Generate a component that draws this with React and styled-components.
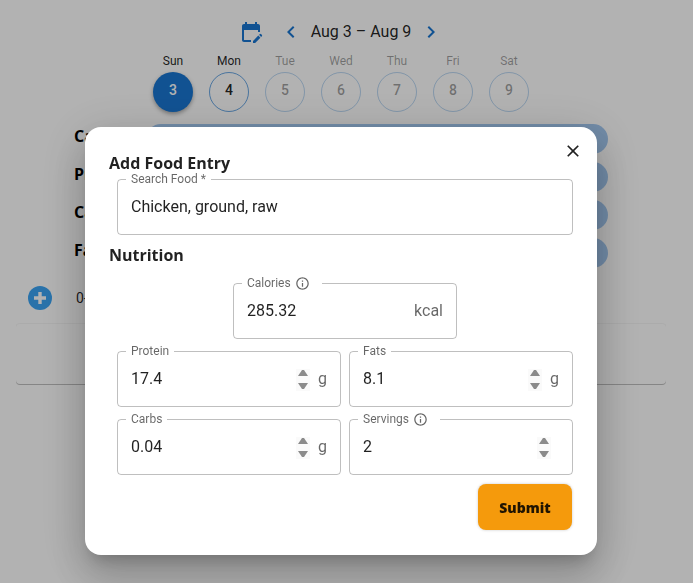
import React, { useRef } from "react";
import styled, { createGlobalStyle } from "styled-components";

const GlobalStyle = createGlobalStyle`
  *, *::before, *::after { box-sizing: border-box; }
  body {
    margin: 0;
    background: #fff;
    color: rgba(0, 0, 0, 0.87);
    font-family: Roboto, "Liberation Sans", sans-serif;
    font-size: 16px;
  }
  button, input { font: inherit; color: inherit; }
`;

const headingFont = `"Open Sans", "Noto Sans", sans-serif`;

const Page = styled.main`
  min-height: 100vh;
  padding: 20px 27px 0 16px;
`;

const WeekBar = styled.header`
  display: flex;
  justify-content: center;
  align-items: center;
  height: 24px;
`;

const IconButton = styled.button`
  display: inline-flex;
  padding: 0;
  border: 0;
  background: none;
  color: ${(p) => p.$color || "#1976d2"};
  margin-right: ${(p) => p.$gap || 0}px;
  cursor: pointer;
`;

const WeekRange = styled.span`
  padding: 0 8px;
  line-height: 24px;
`;

const Days = styled.div`
  display: flex;
  justify-content: center;
  gap: 16px;
  margin-top: 8px;
`;

const Day = styled.div`
  display: flex;
  flex-direction: column;
  align-items: center;
  width: 40px;
  color: ${(p) => (p.$muted ? "rgba(0, 0, 0, 0.38)" : "rgba(0, 0, 0, 0.87)")};
`;

const DayName = styled.span`
  height: 20px;
  font-size: 12px;
  line-height: 18px;
`;

const DayButton = styled.button`
  width: 40px;
  height: 40px;
  padding: 0 0 4px;
  border: 1px solid rgba(25, 118, 210, ${(p) => (p.$muted ? 0.3 : 0.65)});
  border-radius: 50%;
  background: ${(p) => (p.$selected ? "#1976d2" : "transparent")};
  color: ${(p) => (p.$selected ? "#fff" : "inherit")};
  box-shadow: ${(p) => (p.$selected ? "0 2px 4px rgba(0, 0, 0, 0.35)" : "none")};
  font-size: 14px;
  font-weight: 500;
`;

const Goals = styled.section`
  display: flex;
  flex-direction: column;
  gap: 8px;
  padding: 12px 58px 0;
`;

const Goal = styled.div`
  display: flex;
  align-items: center;
`;

const GoalName = styled.span`
  width: 72px;
  padding-bottom: 6px;
  font-family: ${headingFont};
  font-weight: 700;
  line-height: 24px;
  color: #000;
`;

const GoalBar = styled.div`
  flex: 1;
  height: 30px;
  border-radius: 15px;
  background: #a3c8f0;
`;

const Meal = styled.section`
  margin-top: 5px;
`;

const MealHeader = styled.div`
  display: flex;
  align-items: center;
  gap: 12px;
  height: 50px;
  padding: 0 12px;
  font-size: 14px;
`;

const MealBody = styled.div`
  height: 62px;
  border-radius: 4px;
  box-shadow: inset 0 1px 0 rgba(0, 0, 0, 0.04), inset 0 -1px 0 rgba(0, 0, 0, 0.25);
`;

const Backdrop = styled.div`
  position: fixed;
  inset: 0;
  display: flex;
  justify-content: center;
  align-items: flex-start;
  padding: 127px 27px 28px 16px;
  overflow: hidden;
  background: rgba(0, 0, 0, 0.3);
`;

const Dialog = styled.div`
  width: 100%;
  max-width: 512px;
  padding: 14px 24px 25px;
  border-radius: 16px;
  background: #fff;
  box-shadow: 0 11px 15px -7px rgba(0, 0, 0, 0.2), 0 24px 38px 3px rgba(0, 0, 0, 0.14),
    0 9px 46px 8px rgba(0, 0, 0, 0.12);
`;

const DialogHeader = styled.div`
  display: flex;
  align-items: flex-start;
  justify-content: space-between;
  height: 32px;
  margin-right: -10px;
`;

const Title = styled.h2`
  margin: 0;
  padding: ${(p) => p.$top || 0}px 0 ${(p) => p.$bottom || 0}px;
  font-family: ${headingFont};
  font-size: 16px;
  font-weight: 700;
  line-height: 18px;
`;

const Form = styled.form`
  display: flex;
  flex-direction: column;
`;

const FieldGrid = styled.div`
  display: grid;
  grid-template-columns: ${(p) => (p.$columns === 2 ? "1fr 1fr" : "1fr")};
  gap: 6px 8px;
  padding: 0 0 0 8px;
`;

const CenteredField = styled.div`
  width: 232px;
  max-width: 100%;
  margin: 10px auto 6px;
  padding-left: 8px;
  align-self: center;
`;

const FieldBox = styled.fieldset`
  display: flex;
  align-items: center;
  min-width: 0;
  height: 62px;
  margin: 0;
  padding: 0 13px 7px 8px;
  border: 1px solid rgba(0, 0, 0, 0.25);
  border-radius: 4px;

  legend {
    display: flex;
    align-items: center;
    gap: 4px;
    height: 13px;
    padding: 0 ${(p) => (p.$info ? 12 : 5)}px 0 5px;
    color: rgba(0, 0, 0, 0.6);
    font-size: 12px;
    line-height: 13px;
    white-space: nowrap;
  }

  input {
    flex: 1;
    min-width: 0;
    height: 24px;
    padding: 0 0 0 5px;
    border: 0;
    outline: 0;
    background: none;
    appearance: textfield;
  }

  input::-webkit-inner-spin-button {
    display: none;
  }
`;

const Stepper = styled.span`
  display: flex;
  flex-direction: column;
  justify-content: space-between;
  width: 14px;
  height: 22px;
  margin-top: 3px;
  background: #fafafa;
`;

const StepButton = styled.button`
  display: flex;
  justify-content: center;
  padding: 1px 0;
  border: 0;
  background: none;
  color: #8b8b8b;
`;

const Unit = styled.span`
  margin-left: 8px;
  color: rgba(0, 0, 0, 0.6);
`;

const Submit = styled.button`
  align-self: flex-end;
  width: 94px;
  height: 46px;
  margin: 9px 1px 0 0;
  border: 0;
  border-radius: 8px;
  background: #f59a0c;
  box-shadow: 0 0 3px rgba(0, 0, 0, 0.22);
  font-family: ${headingFont};
  font-size: 14px;
  font-weight: 800;
`;

function Icon({ d, size = 24 }) {
  return (
    <svg width={size} height={size} viewBox="0 0 24 24" fill="currentColor" aria-hidden="true">
      <path d={d} />
    </svg>
  );
}

const paths = {
  calendar:
    "M12 22H5c-1.11 0-2-.9-2-2L3.01 6c0-1.1.88-2 1.99-2h1V2h2v2h8V2h2v2h1c1.1 0 2 .9 2 2v6h-2v-2H5v10h7v2zm10.13-5.01.71-.71c.39-.39.39-1.02 0-1.41l-.71-.71a.9959.9959 0 0 0-1.41 0l-.71.71 2.12 2.12zm-.71.71-5.3 5.3H14v-2.12l5.3-5.3 2.12 2.12z",
  left: "M15.41 7.41 14 6l-6 6 6 6 1.41-1.41L10.83 12z",
  right: "M10 6 8.59 7.41 13.17 12l-4.58 4.59L10 18l6-6z",
  close:
    "M19 6.41 17.59 5 12 10.59 6.41 5 5 6.41 10.59 12 5 17.59 6.41 19 12 13.41 17.59 19 19 17.59 13.41 12z",
  info: "M11 7h2v2h-2zm0 4h2v6h-2zm1-9C6.48 2 2 6.48 2 12s4.48 10 10 10 10-4.48 10-10S17.52 2 12 2zm0 18c-4.41 0-8-3.59-8-8s3.59-8 8-8 8 3.59 8 8-3.59 8-8 8z",
};

function AddIcon() {
  return (
    <svg width="24" height="24" viewBox="0 0 24 24" aria-hidden="true">
      <circle cx="12" cy="12" r="12" fill="currentColor" />
      <path d="M12 6v12M6 12h12" stroke="#fff" strokeWidth="3.4" />
    </svg>
  );
}

function Triangle({ points }) {
  return (
    <svg width="10" height="7" viewBox="0 0 10 7" fill="currentColor" aria-hidden="true">
      <polygon points={points} />
    </svg>
  );
}

function Field({ id, label, value, unit, info, type = "number" }) {
  const input = useRef(null);
  return (
    <FieldBox $info={info}>
      <legend>
        <label htmlFor={id}>{label}</label>
        {info && <Icon d={paths.info} size={15} />}
      </legend>
      <input ref={input} id={id} type={type} step="any" defaultValue={value} />
      {type === "number" && (
        <Stepper>
          <StepButton
            type="button"
            aria-label={`Increase ${label}`}
            onClick={() => (input.current.value = Number(input.current.value) + 1)}
          >
            <Triangle points="4,0 6,0 10,6 0,6" />
          </StepButton>
          <StepButton
            type="button"
            aria-label={`Decrease ${label}`}
            onClick={() => (input.current.value = Math.max(0, Number(input.current.value) - 1))}
          >
            <Triangle points="0,0 10,0 6,6 4,6" />
          </StepButton>
        </Stepper>
      )}
      {unit !== undefined && <Unit>{unit}</Unit>}
    </FieldBox>
  );
}

const days = ["Sun", "Mon", "Tue", "Wed", "Thu", "Fri", "Sat"];
const goals = ["Calories", "Protein", "Carbs", "Fats"];

export default function App() {
  return (
    <>
      <GlobalStyle />
      <Page>
        <WeekBar>
          <IconButton $gap={16} aria-label="Choose date"><Icon d={paths.calendar} /></IconButton>
          <IconButton aria-label="Previous week"><Icon d={paths.left} /></IconButton>
          <WeekRange>Aug 3 – Aug 9</WeekRange>
          <IconButton aria-label="Next week"><Icon d={paths.right} /></IconButton>
        </WeekBar>
        <Days>
          {days.map((name, i) => (
            <Day key={name} $muted={i > 1}>
              <DayName>{name}</DayName>
              <DayButton $selected={i === 0} $muted={i > 1} disabled={i > 1}>{i + 3}</DayButton>
            </Day>
          ))}
        </Days>
        <Goals>
          {goals.map((name) => (
            <Goal key={name}>
              <GoalName>{name}</GoalName>
              <GoalBar />
            </Goal>
          ))}
        </Goals>
        <Meal>
          <MealHeader>
            <IconButton $color="#3ba4f4" $gap={12} aria-label="Add food"><AddIcon /></IconButton>
            <span>0-</span>
          </MealHeader>
          <MealBody />
        </Meal>
      </Page>
      <Backdrop>
        <Dialog role="dialog" aria-modal="true" aria-labelledby="dialog-title">
          <DialogHeader>
            <Title id="dialog-title" $top={13}>Add Food Entry</Title>
            <IconButton $color="rgba(0, 0, 0, 0.87)" aria-label="Close">
              <Icon d={paths.close} size={20} />
            </IconButton>
          </DialogHeader>
          <Form onSubmit={(e) => e.preventDefault()}>
            <FieldGrid>
              <Field id="food" label="Search Food *" type="text" value="Chicken, ground, raw" />
            </FieldGrid>
            <Title as="h3" $top={11} $bottom={3}>Nutrition</Title>
            <CenteredField>
              <Field id="calories" label="Calories" type="text" value="285.32" unit="kcal" info />
            </CenteredField>
            <FieldGrid $columns={2}>
              <Field id="protein" label="Protein" value="17.4" unit="g" />
              <Field id="fats" label="Fats" value="8.1" unit="g" />
              <Field id="carbs" label="Carbs" value="0.04" unit="g" />
              <Field id="servings" label="Servings" value="2" unit="" info />
            </FieldGrid>
            <Submit type="submit">Submit</Submit>
          </Form>
        </Dialog>
      </Backdrop>
    </>
  );
}
